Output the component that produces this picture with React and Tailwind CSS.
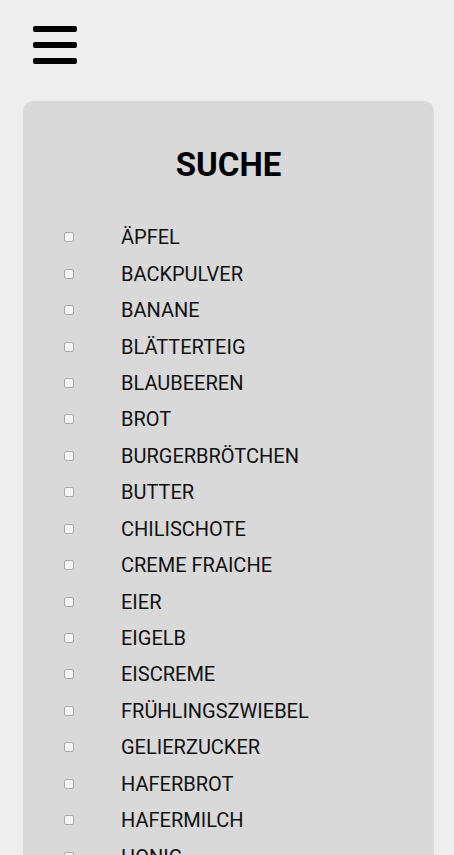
import React from "react";

const items = [
  "ÄPFEL",
  "BACKPULVER",
  "BANANE",
  "BLÄTTERTEIG",
  "BLAUBEEREN",
  "BROT",
  "BURGERBRÖTCHEN",
  "BUTTER",
  "CHILISCHOTE",
  "CREME FRAICHE",
  "EIER",
  "EIGELB",
  "EISCREME",
  "FRÜHLINGSZWIEBEL",
  "GELIERZUCKER",
  "HAFERBROT",
  "HAFERMILCH",
  "HONIG",
  "JOGHURT",
  "KAROTTEN",
];

export default function App() {
  return (
    <div className="min-h-screen bg-[#eeeeee] font-['Roboto',sans-serif] text-[#111]">
      {/* Menu button */}
      <div className="pl-[33px] pt-[26px]">
        <div className="flex w-[44px] flex-col gap-[10px]">
          <div className="h-[6px] rounded-[2px] bg-black" />
          <div className="h-[6px] rounded-[2px] bg-black" />
          <div className="h-[6px] rounded-[2px] bg-black" />
        </div>
      </div>

      {/* Search card */}
      <div className="mx-[20px] ml-[23px] mt-[37px] rounded-[10px] bg-[#d9d9d9] pb-10 pt-[42px]">
        <h1 className="text-center text-[33px] font-bold leading-[44px] text-black">SUCHE</h1>
        <ul className="mt-[32px]">
          {items.map((item) => (
            <li key={item} className="flex h-[36.45px] items-center">
              <span className="ml-[41px] h-[10px] w-[10px] rounded-[2px] border border-[#aaa] bg-[#f4f4f4]" />
              <span className="ml-[47px] text-[20px] leading-none">{item}</span>
            </li>
          ))}
        </ul>
      </div>
    </div>
  );
}
